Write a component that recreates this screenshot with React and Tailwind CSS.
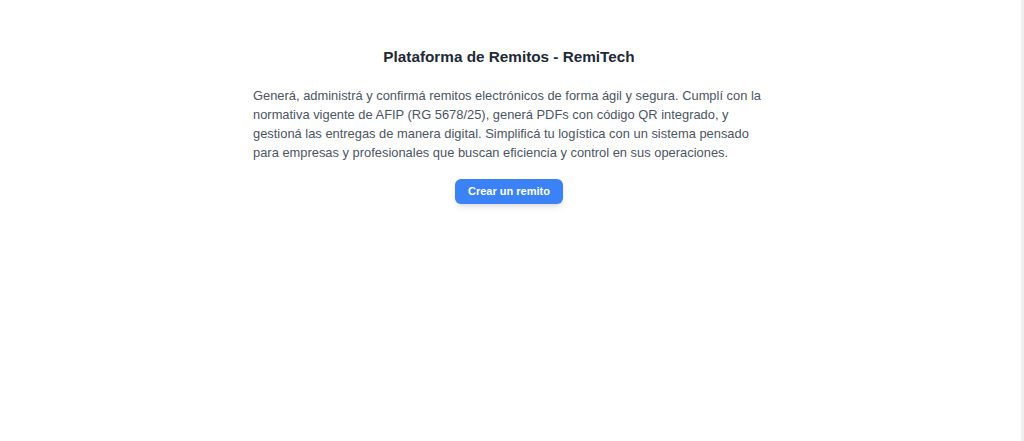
import React from 'react';

const App = () => {
  return (
    <div className="flex min-h-[441px] bg-white" style={{ fontFamily: '"Liberation Sans", Arial, sans-serif' }}>
      <div className="flex-1 pr-[3px]">
        <div className="mx-auto w-[512px] pt-[47px] text-center">
          <h1 className="text-[15.3px] font-bold text-[#1f2937] leading-[20px]">
            Plataforma de Remitos - RemiTech
          </h1>
          <p className="mt-[19px] whitespace-nowrap text-left text-[12.9px] leading-[19px] text-[#4b5563]">
            Generá, administrá y confirmá remitos electrónicos de forma ágil y segura. Cumplí con la
            <br />
            normativa vigente de AFIP (RG 5678/25), generá PDFs con código QR integrado, y
            <br />
            gestioná las entregas de manera digital. Simplificá tu logística con un sistema pensado
            <br />
            para empresas y profesionales que buscan eficiencia y control en sus operaciones.
          </p>
          <button className="mt-[17px] h-[25px] w-[108px] rounded-md bg-[#3b82f6] text-[11px] font-bold text-white shadow-md">
            Crear un remito
          </button>
        </div>
      </div>
      <div className="w-[3px] bg-[#f0f0f0]" />
    </div>
  );
};

export default App;
